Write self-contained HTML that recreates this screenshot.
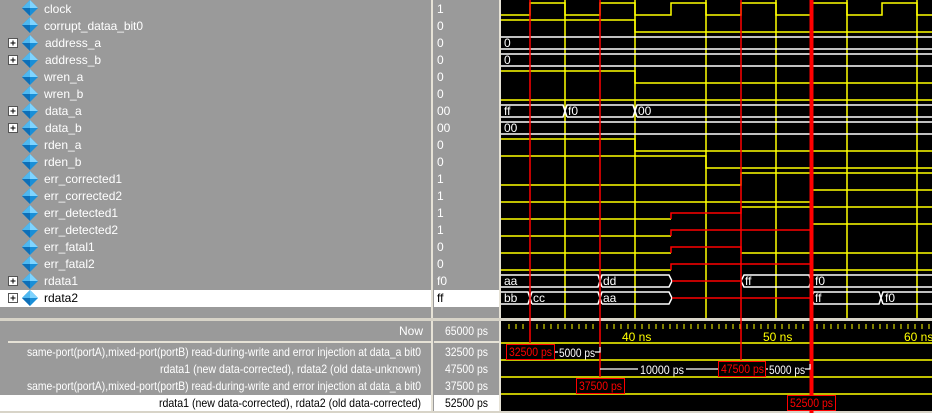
<!DOCTYPE html>
<html><head><meta charset="utf-8"><style>
html,body{margin:0;padding:0;background:#9a9a9a;}
svg{display:block;font-family:"Liberation Sans",sans-serif;}
</style></head><body>
<svg width="932" height="413" viewBox="0 0 932 413" xmlns="http://www.w3.org/2000/svg">
<defs>
<g id="dia"><path d="M0 -8 L8 0 L0 8 L-8 0 Z" fill="#1a8fd8"/><path d="M0 -8 L8 0 L0 0 Z" fill="#7fd4ff"/><path d="M-8 0 L0 -8 L0 0 Z" fill="#4fb8f0"/><path d="M-8 0 L0 8 L0 0Z" fill="#0d6fb8"/></g>
<g id="plus"><rect x="0.5" y="0.5" width="9" height="9" fill="#fff" stroke="#555"/><path d="M2.5 5H7.5M5 2.5V7.5" stroke="#000"/></g>
</defs>
<rect x="0" y="0" width="932" height="413" fill="#9a9a9a"/>
<rect x="0" y="290" width="431" height="17" fill="#fff"/>
<rect x="434" y="290" width="65" height="17" fill="#fff"/>
<rect x="0" y="395" width="431" height="17" fill="#fff"/>
<rect x="434" y="395" width="65" height="17" fill="#fff"/>
<rect x="431" y="0" width="2" height="413" fill="#e6e2d6"/>
<rect x="499" y="0" width="2" height="413" fill="#e6e2d6"/>
<rect x="501" y="0" width="431" height="318" fill="#000"/>
<rect x="0" y="318" width="932" height="3" fill="#d8d4c8"/>
<rect x="501" y="321" width="431" height="92" fill="#000"/>
<rect x="8" y="341" width="423" height="2" fill="#e6e2d6"/>
<rect x="434" y="341" width="65" height="2" fill="#e6e2d6"/>
<rect x="0" y="411" width="932" height="2" fill="#d8d4c8"/>

<g font-size="12" fill="#fff">
<use href="#dia" x="30" y="8"/><text x="44" y="13">clock</text>
<use href="#dia" x="30" y="25"/><text x="44" y="30" textLength="99">corrupt_dataa_bit0</text>
<use href="#plus" x="8" y="38"/><use href="#dia" x="30" y="43"/><text x="45" y="47">address_a</text>
<use href="#plus" x="8" y="55"/><use href="#dia" x="30" y="60"/><text x="45" y="64">address_b</text>
<use href="#dia" x="30" y="77"/><text x="44" y="81">wren_a</text>
<use href="#dia" x="30" y="94"/><text x="44" y="98">wren_b</text>
<use href="#plus" x="8" y="106"/><use href="#dia" x="30" y="111"/><text x="45" y="115">data_a</text>
<use href="#plus" x="8" y="123"/><use href="#dia" x="30" y="128"/><text x="45" y="132">data_b</text>
<use href="#dia" x="30" y="145"/><text x="44" y="149">rden_a</text>
<use href="#dia" x="30" y="162"/><text x="44" y="166">rden_b</text>
<use href="#dia" x="30" y="179"/><text x="44" y="183">err_corrected1</text>
<use href="#dia" x="30" y="196"/><text x="44" y="200">err_corrected2</text>
<use href="#dia" x="30" y="213"/><text x="44" y="217">err_detected1</text>
<use href="#dia" x="30" y="230"/><text x="44" y="234">err_detected2</text>
<use href="#dia" x="30" y="247"/><text x="44" y="251">err_fatal1</text>
<use href="#dia" x="30" y="264"/><text x="44" y="268">err_fatal2</text>
<use href="#plus" x="8" y="276"/><use href="#dia" x="30" y="281"/><text x="44" y="285">rdata1</text>
<use href="#plus" x="8" y="293"/><use href="#dia" x="30" y="298"/><text x="44" y="302" fill="#000">rdata2</text>
</g>
<g font-size="12" fill="#fff">
<text x="437" y="13">1</text><text x="437" y="30">0</text><text x="437" y="47">0</text><text x="437" y="64">0</text>
<text x="437" y="81">0</text><text x="437" y="98">0</text><text x="437" y="115">00</text><text x="437" y="132">00</text>
<text x="437" y="149">0</text><text x="437" y="166">0</text><text x="437" y="183">1</text><text x="437" y="200">1</text>
<text x="437" y="217">1</text><text x="437" y="234">1</text><text x="437" y="251">0</text><text x="437" y="268">0</text>
<text x="437" y="285">f0</text><text x="437" y="302" fill="#000">ff</text>
</g>
<g font-size="12" fill="#fff">
<text x="399" y="335">Now</text>
<text x="27" y="356" textLength="394" lengthAdjust="spacingAndGlyphs">same-port(portA),mixed-port(portB) read-during-write and error injection at data_a bit0</text>
<text x="160" y="373" textLength="261" lengthAdjust="spacingAndGlyphs">rdata1 (new data-corrected), rdata2 (old data-unknown)</text>
<text x="27" y="390" textLength="394" lengthAdjust="spacingAndGlyphs">same-port(portA),mixed-port(portB) read-during-write and error injection at data_a bit0</text>
<text x="159" y="407" fill="#000" textLength="262" lengthAdjust="spacingAndGlyphs">rdata1 (new data-corrected), rdata2 (old data-corrected)</text>
<text x="445" y="335" textLength="43" lengthAdjust="spacingAndGlyphs">65000 ps</text>
<text x="445" y="356" textLength="43" lengthAdjust="spacingAndGlyphs">32500 ps</text>
<text x="445" y="373" textLength="43" lengthAdjust="spacingAndGlyphs">47500 ps</text>
<text x="445" y="390" textLength="43" lengthAdjust="spacingAndGlyphs">37500 ps</text>
<text x="445" y="407" fill="#000" textLength="43" lengthAdjust="spacingAndGlyphs">52500 ps</text>
</g>

<g stroke="#ffff00" stroke-width="1.5">
<path d="M565 0V318M635 0V318M706 0V318M776 0V318M847 0V318M917 0V318"/>
</g>
<g fill="none" stroke-width="1.5">
<path stroke="#ffff00" d="M501 15H530V3H565V15H600V3H635V15H671V3H706V15H741V3H776V15H811V3H847V15H882V3H917V15H932"/>
<path stroke="#ffff00" d="M501 20H635V32H932"/>
<path stroke="#fff" d="M501 37H932M501 49H932M501 54H932M501 66H932"/>
<path stroke="#ffff00" d="M501 71H635V83H932"/>
<path stroke="#ffff00" d="M501 100H932"/>
<path stroke="#fff" d="M501 105H563L567 117M501 117H563L567 105H633L637 117M567 117H633L637 105H932M637 117H932"/>
<path stroke="#fff" d="M501 122H932M501 134H932"/>
<path stroke="#ffff00" d="M501 139H635V151H932"/>
<path stroke="#ffff00" d="M501 156H706V168H932"/>
<path stroke="#ffff00" d="M501 185H741V173H932"/>
<path stroke="#ffff00" d="M501 202H811V190H932"/>
<path stroke="#ffff00" d="M501 219H671M741 207H932M501 236H671M811 224H932M501 253H671M741 253H932M501 270H671M811 270H932"/>
<path stroke="#ff0000" d="M671 219V213H741V207M671 236V230H811V224M671 253V247H741V253M671 270V264H811V270"/>
<path stroke="#fff" d="M501 275H598L602 287M501 287H598L602 275H669L672 281L669 287H602M741 281L744 275H809L813 287M741 281L744 287H809L813 275H932M813 287H932"/>
<path stroke="#fff" d="M501 292H528L532 304M501 304H528L532 292H598L602 304M532 304H598L602 292H669L672 298L669 304H602M811 298L814 292H879L883 304M811 298L814 304H879L883 292H932M883 304H932"/>
<path stroke="#ff0000" d="M672 281H741M672 298H811"/>
</g>
<g font-size="12" fill="#fff">
<text x="504" y="47">0</text><text x="504" y="64">0</text>
<text x="504" y="115">ff</text><text x="568" y="115">f0</text><text x="638" y="115">00</text>
<text x="504" y="132">00</text>
<text x="504" y="285">aa</text><text x="603" y="285">dd</text><text x="745" y="285">ff</text><text x="815" y="285">f0</text>
<text x="504" y="302">bb</text><text x="533" y="302">cc</text><text x="603" y="302">aa</text><text x="815" y="302">ff</text><text x="885" y="302">f0</text>
</g>

<g stroke="#ffff00" stroke-width="1">
<path d="M509 324v5M516 324v5M523 324v5M530 324v5M537 324v5M544 324v5M551 324v5M558 324v5M565 324v5M572 324v5M579 324v5M586 324v5M593 324v5M600 324v5M607 324v5M614 324v5M621 324v5M628 324v5M635 324v5M642 324v5M649 324v5M656 324v5M663 324v5M670 324v5M677 324v5M684 324v5M691 324v5M698 324v5M705 324v5M712 324v5M719 324v5M726 324v5M733 324v5M740 324v5M747 324v5M754 324v5M761 324v5M768 324v5M775 324v5M782 324v5M789 324v5M796 324v5M803 324v5M810 324v5M817 324v5M824 324v5M831 324v5M838 324v5M845 324v5M852 324v5M859 324v5M866 324v5M873 324v5M880 324v5M887 324v5M894 324v5M901 324v5M908 324v5M915 324v5M922 324v5M929 324v5"/>
<path stroke-width="1.5" d="M501 343H932M501 360H932M501 377H932M501 394H932"/>
</g>
<g font-size="12" fill="#ffff00">
<text x="622" y="341">40 ns</text><text x="763" y="341">50 ns</text><text x="904" y="341">60 ns</text>
</g>

<g stroke="#ff0000">
<path stroke-width="1.5" d="M530 0V343M600 0V377M741 0V360"/>
<path stroke-width="4" d="M811.5 0V413"/>
</g>
<g stroke="#fff" stroke-width="1.2">
<path d="M554 352H558M595 352H600V347M600 369H638M686 369H718M764 369H768M805 369H810V364"/>
</g>
<g font-size="12">
<rect x="506.5" y="344.5" width="48" height="15" fill="#000" stroke="#ff0000"/>
<text x="509" y="356" fill="#ff0000" textLength="43" lengthAdjust="spacingAndGlyphs">32500 ps</text>
<text x="559" y="357" fill="#fff" textLength="36" lengthAdjust="spacingAndGlyphs">5000 ps</text>
<text x="640" y="374" fill="#fff" textLength="44" lengthAdjust="spacingAndGlyphs">10000 ps</text>
<rect x="718.5" y="361.5" width="47" height="15" fill="#000" stroke="#ff0000"/>
<text x="721" y="373" fill="#ff0000" textLength="43" lengthAdjust="spacingAndGlyphs">47500 ps</text>
<text x="769" y="374" fill="#fff" textLength="36" lengthAdjust="spacingAndGlyphs">5000 ps</text>
<rect x="576.5" y="378.5" width="48" height="15" fill="#000" stroke="#ff0000"/>
<text x="579" y="390" fill="#ff0000" textLength="43" lengthAdjust="spacingAndGlyphs">37500 ps</text>
<rect x="787.5" y="395.5" width="48" height="15" fill="#000" stroke="#ff0000"/>
<text x="790" y="407" fill="#ff0000" textLength="43" lengthAdjust="spacingAndGlyphs">52500 ps</text>
</g>
</svg>
</body></html>
